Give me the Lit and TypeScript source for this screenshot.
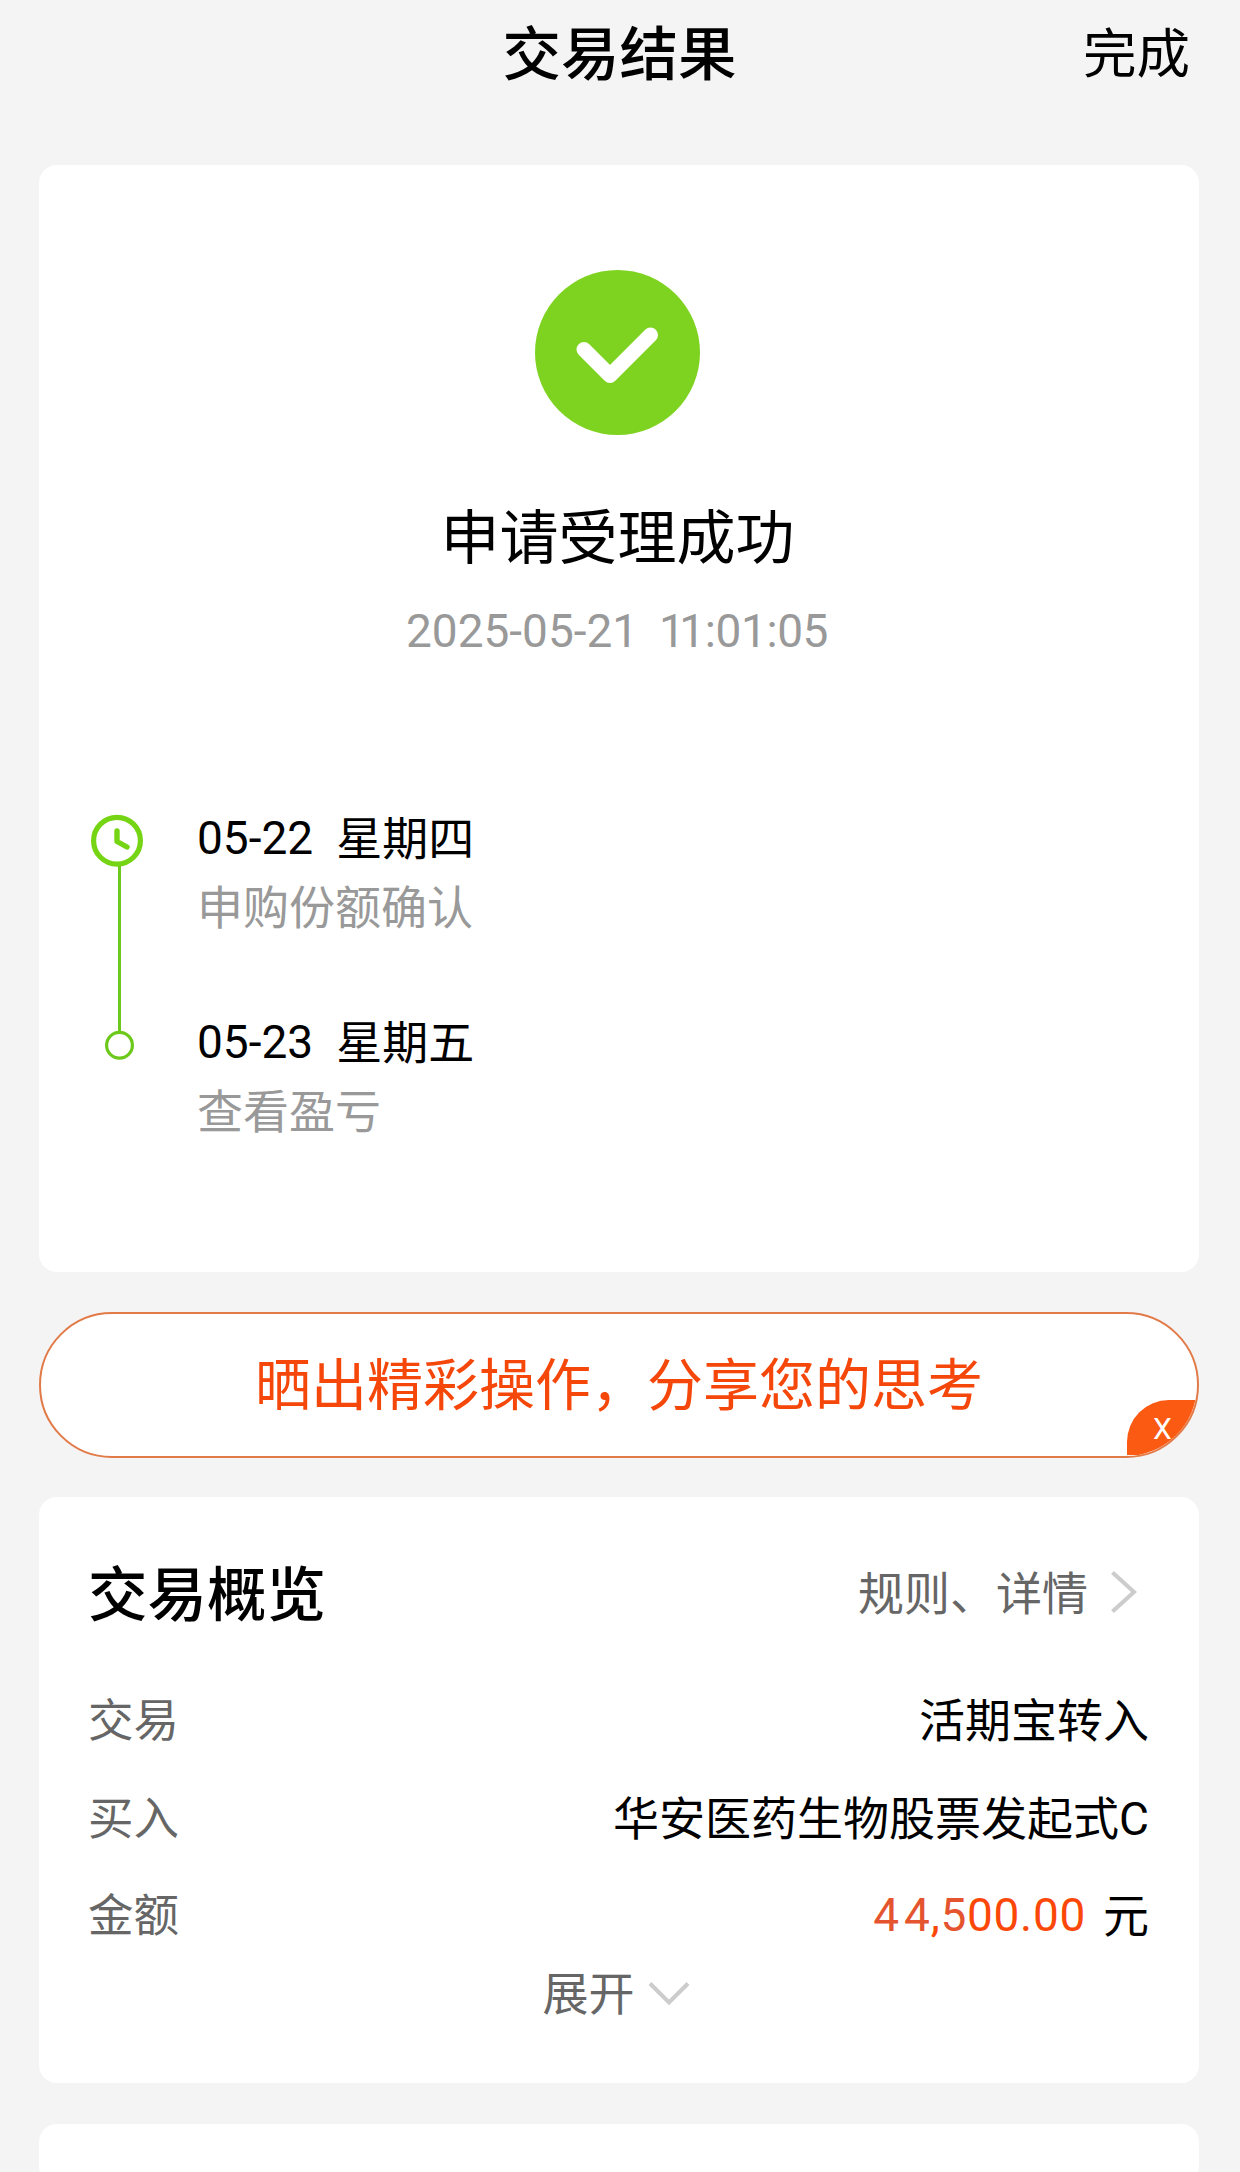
import { LitElement, html, css } from "lit";
import { customElement, property } from "lit/decorators.js";

interface Step {
  date: string;
  day: string;
  note: string;
}

const STEPS: Step[] = [
  { date: "05-22", day: "星期四", note: "申购份额确认" },
  { date: "05-23", day: "星期五", note: "查看盈亏" },
];

@customElement("result-header")
class ResultHeader extends LitElement {
  static styles = css`
    :host {
      display: grid;
      grid-template-columns: 1fr auto 1fr;
      align-items: center;
      height: 110px;
      padding: 0 50px 55px 49px;
    }
    .title {
      grid-column: 2;
      font-size: 58.5px;
      font-weight: 500;
      line-height: 80px;
    }
    .done {
      justify-self: end;
      font-size: 53.5px;
      line-height: 80px;
    }
  `;

  render() {
    return html`
      <span class="title">交易结果</span>
      <span class="done">完成</span>
    `;
  }
}

@customElement("result-timeline")
class ResultTimeline extends LitElement {
  static styles = css`
    :host {
      display: flex;
      gap: 54px;
    }
    .rail {
      display: block;
      flex: none;
    }
    .steps {
      display: flex;
      flex-direction: column;
      gap: 74px;
    }
    .step {
      display: flex;
      flex-direction: column;
      gap: 9px;
      font-size: 46px;
      line-height: 60px;
    }
    .when {
      display: flex;
      gap: 23px;
      height: 60px;
    }
    .date {
      margin-top: -1px;
    }
    .note {
      margin-bottom: 1px;
      color: #999;
    }
  `;

  @property({ attribute: false }) steps: Step[] = [];

  render() {
    return html`
      <svg class="rail" width="52" height="264" viewBox="0 0 52 264" fill="none">
        <path d="M28.5 57V223" stroke="#6cc91b" stroke-width="3" />
        <circle cx="26" cy="31.7" r="23.4" stroke="#75d414" stroke-width="5.2" />
        <path
          d="M26 22V32.5L36 38"
          stroke="#75d414"
          stroke-width="5.4"
          stroke-linecap="round"
          stroke-linejoin="round"
        />
        <circle cx="28.5" cy="236.2" r="12.9" stroke="#6cc91b" stroke-width="3.2" />
      </svg>
      <div class="steps">
        ${this.steps.map(
          (s) => html`
            <div class="step">
              <div class="when"><span class="date">${s.date}</span><span>${s.day}</span></div>
              <div class="note">${s.note}</div>
            </div>
          `
        )}
      </div>
    `;
  }
}

@customElement("share-banner")
class ShareBanner extends LitElement {
  static styles = css`
    :host {
      display: flex;
      position: relative;
      box-sizing: border-box;
      align-items: center;
      justify-content: center;
      height: 146px;
      border: 2px solid #e27a48;
      border-radius: 73px;
      background: #fff;
      overflow: hidden;
    }
    .label {
      padding-top: 2px;
      color: #f5470a;
      font-size: 56px;
      line-height: 76px;
    }
    .close {
      position: absolute;
      right: 0;
      bottom: 1px;
      box-sizing: border-box;
      width: 70px;
      height: 55px;
      padding: 0 0 0 26px;
      border-radius: 42px 0 0 0;
      background: #fb5a12;
      color: #fff;
      font-size: 30px;
      line-height: 57px;
    }
  `;

  render() {
    return html`
      <span class="label">晒出精彩操作，分享您的思考</span>
      <span class="close">X</span>
    `;
  }
}

@customElement("trade-overview")
class TradeOverview extends LitElement {
  static styles = css`
    :host {
      display: flex;
      flex-direction: column;
      box-sizing: border-box;
      height: 586px;
      padding: 59px 50px 0 49px;
      border-radius: 18px;
      background: #fff;
      font-size: 46px;
    }
    .head {
      display: flex;
      align-items: center;
      justify-content: space-between;
      height: 80px;
      margin-bottom: 55px;
    }
    .title {
      font-size: 59.5px;
      font-weight: 500;
      line-height: 80px;
    }
    .rules {
      display: flex;
      align-items: center;
      gap: 21px;
      margin-bottom: 5px;
      padding-right: 12px;
      color: #666;
      line-height: 60px;
    }
    .rules .icon {
      margin-bottom: 4px;
    }
    .row {
      display: flex;
      justify-content: space-between;
      height: 97.7px;
      line-height: 60px;
    }
    .name {
      padding-top: 1px;
      color: #666;
      font-size: 45.5px;
    }
    .money {
      display: flex;
      gap: 17px;
    }
    .sum {
      margin-top: -1px;
      color: #fb4708;
      letter-spacing: 0.7px;
    }
    .soft {
      color: #e4542f;
    }
    .lead {
      letter-spacing: 5px;
    }
    .more {
      display: flex;
      align-items: center;
      justify-content: center;
      gap: 13px;
      height: 60px;
      margin: -20px 5px 0 0;
      color: #666;
      line-height: 60px;
    }
    .icon {
      display: block;
      flex: none;
    }
  `;

  render() {
    return html`
      <div class="head">
        <span class="title">交易概览</span>
        <span class="rules">
          <span>规则、详情</span>
          <svg class="icon" width="28" height="44" viewBox="0 0 28 44" fill="none">
            <path d="M3.5 2.5L25 22L3.5 41.5" stroke="#ccc" stroke-width="4" />
          </svg>
        </span>
      </div>
      <div class="row"><span class="name">交易</span><span>活期宝转入</span></div>
      <div class="row"><span class="name">买入</span><span>华安医药生物股票发起式C</span></div>
      <div class="row">
        <span class="name">金额</span>
        <span class="money">
          <span class="sum"><span class="soft lead">4</span><span class="soft">4</span>,<span class="soft">5</span>00.00</span>
          <span>元</span>
        </span>
      </div>
      <div class="more">
        <span>展开</span>
        <svg class="icon" width="42" height="26" viewBox="0 0 42 26" fill="none">
          <path d="M2 2.5L21 21.5L40 2.5" stroke="#ccc" stroke-width="4" />
        </svg>
      </div>
    `;
  }
}

@customElement("app-root")
class AppRoot extends LitElement {
  static styles = css`
    :host {
      display: block;
      box-sizing: border-box;
      height: 2172px;
      overflow: hidden;
      background: #f4f4f4;
      color: #000;
      font-family: Roboto, "Noto Sans CJK SC", sans-serif;
    }
    .cards {
      display: flex;
      flex-direction: column;
      margin: 0 41px 0 39px;
    }
    .result {
      display: flex;
      flex-direction: column;
      align-items: center;
      box-sizing: border-box;
      height: 1107px;
      padding-top: 105px;
      border-radius: 18px;
      background: #fff;
    }
    .badge {
      display: block;
      flex: none;
      margin-right: 3px;
    }
    .status {
      margin: 69px 3px 0 0;
      font-size: 59px;
      line-height: 70px;
    }
    .time {
      margin: 27px 4px 0 0;
      color: #999;
      font-size: 46px;
      line-height: 60px;
      white-space: pre;
    }
    .clock {
      margin-left: -2px;
      letter-spacing: -0.4px;
    }
    .tight {
      letter-spacing: -5.6px;
    }
    .progress {
      align-self: stretch;
      margin: 148px 0 0 52px;
    }
    .share {
      margin: 40px 0 39px;
    }
    .next {
      height: 60px;
      margin-top: 41px;
      border-radius: 18px;
      background: #fff;
    }
  `;

  render() {
    return html`
      <result-header></result-header>
      <div class="cards">
        <section class="result">
          <svg class="badge" width="165" height="165" viewBox="0 0 165 165" fill="none">
            <circle cx="82.5" cy="82.5" r="82.5" fill="#7ed321" />
            <path
              d="M49 79.5L75 105.5L115.5 65"
              stroke="#fff"
              stroke-width="15"
              stroke-linecap="round"
              stroke-linejoin="round"
            />
          </svg>
          <div class="status">申请受理成功</div>
          <div class="time">2025-05-21  <span class="clock"><span class="tight">1</span>1:01:05</span></div>
          <result-timeline class="progress" .steps=${STEPS}></result-timeline>
        </section>
        <share-banner class="share"></share-banner>
        <trade-overview></trade-overview>
        <section class="next"></section>
      </div>
    `;
  }
}
